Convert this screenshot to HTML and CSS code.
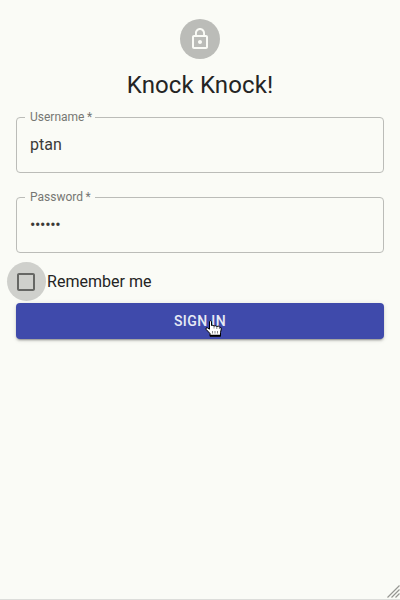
FILE: index.html
```html
<!DOCTYPE html>
<html lang="en">
<head>
<meta charset="utf-8">
<title>Knock Knock!</title>
<link rel="stylesheet" href="styles.css">
</head>
<body>
<main class="page">
  <div class="avatar">
    <svg viewBox="0 0 24 24" width="24" height="24"><path d="M12 17c1.100 0 2-.9 2-2s-.9-2-2-2-2 .9-2 2 .9 2 2 2zm6-9h-1V6c0-2.760-2.240-5-5-5S7 3.240 7 6v2H6c-1.100 0-2 .9-2 2v10c0 1.100.9 2 2 2h12c1.100 0 2-.9 2-2V10c0-1.100-.9-2-2-2zM8.900 6c0-1.710 1.390-3.100 3.100-3.100s3.100 1.390 3.100 3.100v2H8.900V6zM18 20H6V10h12v10z"/></svg>
  </div>
  <h1 class="title">Knock Knock!</h1>
  <form class="form">
    <fieldset class="field">
      <legend class="label">Username&thinsp;*</legend>
      <div class="value">ptan</div>
    </fieldset>
    <fieldset class="field">
      <legend class="label">Password&thinsp;*</legend>
      <div class="value dots">••••••</div>
    </fieldset>
    <div class="remember">
      <span class="ripple"><svg viewBox="0 0 24 24" width="24" height="24"><path d="M19 5v14H5V5h14m0-2H5c-1.100 0-2 .9-2 2v14c0 1.100.9 2 2 2h14c1.100 0 2-.9 2-2V5c0-1.100-.9-2-2-2z"/></svg></span>
      <span class="remember-text">Remember me</span>
    </div>
    <button class="submit" type="button">SIGN IN
      <svg class="cursor" viewBox="0 0 17 17" width="17" height="17"><path d="M4.500 1.500Q5.500 0 6.500 1.500V5.500Q8 4.800 9 6Q10.500 5.300 11.800 6.500Q13.500 5.500 14.500 7Q16.500 7 16.300 9L15.500 12.500V16.300H5V13.500L1.200 9.500Q.3 7.600 2.200 7.700L4.500 9.200Z" fill="#fff" stroke="#000"/><path d="M5 15.500h10.500" stroke="#000" stroke-width="1.500"/><path d="M9 6v2.500M11.800 6.500v2.500M14.400 7v2M7.500 11v2.500M10 11v2.500M12.500 11v2.500" stroke="#555" stroke-width=".7" fill="none"/></svg>
    </button>
  </form>
  <svg class="grip" viewBox="0 0 13 13" width="13" height="13"><path d="M.5 12.500 12.500.5M4.500 12.500 12.500 4.500M8.500 12.500 12.500 8.500"/></svg>
</main>
</body>
</html>
```
FILE: styles.css
```css
* { box-sizing: border-box; }
body { margin: 0; background: #fafbf6; font-family: Roboto, sans-serif; color: #242424; }
.page { position: relative; display: flex; flex-direction: column; align-items: center; height: 600px; padding: 19px 16px 0; border-bottom: 1px solid #dcddda; overflow: hidden; }
.avatar { display: flex; align-items: center; justify-content: center; width: 40px; height: 40px; border-radius: 50%; background: #bbbcb8; flex: none; }
.avatar svg { fill: #fafbf6; }
.title { margin: 10px 0 0; font-size: 24px; font-weight: 400; line-height: 32px; letter-spacing: .12px; }
.form { width: 100%; margin-top: 10px; }
.field { height: 62px; margin: 0 0 18px; padding: 0 13px; border: 1px solid #bbbcb8; border-radius: 4px; min-width: 0; }
.label { width: 70px; height: 13px; margin-left: -5px; padding: 0 0 0 5px; font-size: 12px; line-height: 13px; color: #767773; white-space: nowrap; }
.value { margin-top: 11px; font-size: 16px; line-height: 19px; color: #3a3a38; }
.dots { letter-spacing: -.35px; }
.remember { display: flex; align-items: center; height: 38px; margin: -9px 0 3px -9px; }
.ripple { display: flex; align-items: center; justify-content: center; width: 39px; height: 39px; padding: 2px 1px 0 0; border-radius: 50%; background: #cfd0cc; flex: none; }
.ripple svg { fill: #666764; }
.remember-text { margin-left: 1px; font-size: 16px; letter-spacing: .03px; }
.submit { position: relative; display: block; width: 100%; height: 36px; padding: 0; border: 0; border-radius: 4px; background: #3f4aab; color: #e8eaf5; font: 500 14px/36px Roboto, sans-serif; letter-spacing: .4px; box-shadow: 0 3px 1px -2px rgba(0,0,0,.2), 0 2px 2px rgba(0,0,0,.14), 0 1px 5px rgba(0,0,0,.12); }
.cursor { position: absolute; left: 189px; top: 17px; }
.grip { position: absolute; right: 0; bottom: 1px; fill: none; stroke: #969793; stroke-width: 1.2; }
```
